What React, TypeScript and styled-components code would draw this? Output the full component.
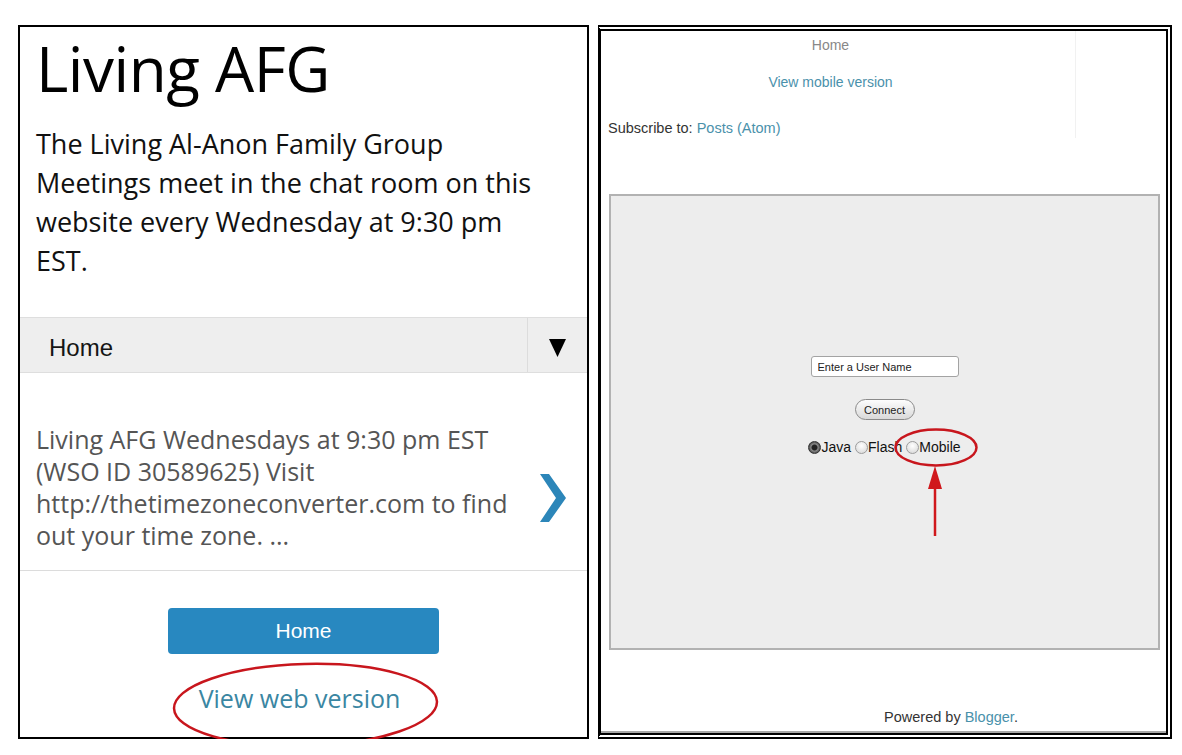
import React from "react";
import styled, { createGlobalStyle } from "styled-components";

const GlobalStyle = createGlobalStyle`
  html, body { margin: 0; padding: 0; background: #ffffff; }
  body { font-family: "Liberation Sans", Arial, sans-serif; }
  * { box-sizing: border-box; }
`;

const Page = styled.div`
  display: flex;
  gap: 9px;
  padding: 25px 0 0 18px;
`;

/* ---------- Left: mobile view ---------- */

const MobilePanel = styled.section`
  position: relative;
  width: 571px;
  height: 714px;
  border: 2px solid #000;
  display: flex;
  flex-direction: column;
  font-family: "Open Sans", "DejaVu Sans", sans-serif;
  background: #fff;
`;

const Header = styled.header`
  padding: 10px 16px 37px;
`;

const Title = styled.h1`
  margin: 0;
  font-weight: 400;
  font-size: 62px;
  line-height: 62px;
  letter-spacing: -0.5px;
  color: #000;
`;

const Description = styled.p`
  margin: 25px 0 0;
  font-size: 27px;
  line-height: 39px;
  color: #111;
  white-space: nowrap;
`;

const MenuBar = styled.nav`
  display: flex;
  height: 56px;
  background: #eeeeee;
  border-top: 1px solid #dedede;
  border-bottom: 1px solid #dedede;
`;

const MenuLabel = styled.div`
  flex: 1;
  display: flex;
  align-items: center;
  padding-left: 29px;
  padding-top: 5px;
  font-family: "Liberation Sans", Arial, sans-serif;
  font-size: 24px;
  color: #151515;
`;

const MenuToggle = styled.div`
  width: 60px;
  display: flex;
  align-items: center;
  justify-content: center;
  padding-top: 5px;
  border-left: 1px solid #dcdcdc;
`;

const PostItem = styled.article`
  display: flex;
  padding: 50px 21px 19px 16px;
  border-bottom: 1px solid #dcdcdc;
`;

const Snippet = styled.p`
  flex: 1;
  margin: 0;
  font-size: 25px;
  line-height: 32px;
  color: #555;
  white-space: nowrap;
`;

const Chevron = styled.div`
  align-self: center;
  margin-top: 22px;
  width: 26px;
  height: 48px;
`;

const Footer = styled.footer`
  display: flex;
  flex-direction: column;
  align-items: center;
  padding-top: 37px;
`;

const HomeButton = styled.button`
  width: 271px;
  height: 46px;
  border: none;
  border-radius: 4px;
  background: #2888c0;
  color: #fff;
  font-family: "Liberation Sans", Arial, sans-serif;
  font-size: 21px;
  padding: 0;
`;

const WebLink = styled.a`
  margin-top: 26px;
  margin-right: 8px;
  font-size: 25px;
  line-height: 36px;
  color: #3a86a2;
  text-decoration: none;
`;

const Annotation = styled.svg<{ $left: number; $top: number }>`
  position: absolute;
  left: ${(p) => p.$left}px;
  top: ${(p) => p.$top}px;
  overflow: visible;
  pointer-events: none;
`;

/* ---------- Right: web view ---------- */

const WebPanel = styled.section`
  position: relative;
  width: 574px;
  height: 714px;
  border: 6px double #000;
  border-left: 3px solid #000;
  display: flex;
  flex-direction: column;
  font-family: "Liberation Sans", Arial, sans-serif;
  background: #fff;
`;

const TopRow = styled.div`
  display: flex;
  height: 107px;
`;

const MainCol = styled.div`
  flex: 1;
  display: flex;
  flex-direction: column;
  padding: 6px 22px 0 7px;
`;

const Sidebar = styled.aside`
  width: 91px;
  border-left: 1px solid #f1f1f1;
`;

const CenterLine = styled.div<{ $gap: number; $color: string }>`
  margin-top: ${(p) => p.$gap}px;
  text-align: center;
  font-size: 14px;
  line-height: 16px;
  color: ${(p) => p.$color};
`;

const Subscribe = styled.div`
  margin-top: 30px;
  font-size: 14.5px;
  line-height: 17px;
  color: #333;
`;

const TealLink = styled.a`
  color: #4a91ab;
  text-decoration: none;
`;

const ChatBox = styled.div`
  position: relative;
  height: 456px;
  margin: 56px 6px 0 8px;
  border: 2px solid #b2b2b2;
  background: #ededed;
  display: flex;
  flex-direction: column;
  align-items: center;
  padding-top: 160px;
`;

const NameInput = styled.input`
  width: 148px;
  height: 21px;
  border: 1px solid #a3a3a3;
  border-radius: 3px;
  background: #fff;
  padding: 0 6px;
  font-family: "Liberation Sans", Arial, sans-serif;
  font-size: 11px;
  color: #222;
  outline: none;
`;

const ConnectButton = styled.button`
  margin-top: 22px;
  width: 60px;
  height: 21px;
  padding: 0;
  border: 1px solid #8a8a8a;
  border-radius: 11px;
  background: linear-gradient(#fdfdfd, #d9d9d9);
  font-family: "Liberation Sans", Arial, sans-serif;
  font-size: 11px;
  color: #222;
`;

const OptionRow = styled.div`
  margin-top: 19px;
  display: flex;
  gap: 4px;
  font-size: 14px;
  line-height: 16px;
  color: #111;
`;

const Option = styled.label`
  display: flex;
  align-items: center;
`;

const Radio = styled.span<{ $checked?: boolean }>`
  display: inline-block;
  width: 13px;
  height: 13px;
  border-radius: 50%;
  border: 1px solid ${(p) => (p.$checked ? "#333" : "#9c9c9c")};
  background: ${(p) =>
    p.$checked
      ? "radial-gradient(circle, #222 0 2.5px, #8a8a8a 3.5px, #444 6px)"
      : "radial-gradient(circle at 50% 35%, #ffffff, #d4d4d4)"};
`;

const PoweredBy = styled.div`
  height: 83px;
  padding: 59px 0 0 135px;
  text-align: center;
  font-size: 14.5px;
  line-height: 17px;
  color: #333;
  border-bottom: 2px solid #a6a6a6;
`;

const RED = "#c8161d";

export default function App() {
  return (
    <>
      <GlobalStyle />
      <Page>
        <MobilePanel>
          <Header>
            <Title>Living AFG</Title>
            <Description>
              The Living Al-Anon Family Group
              <br />
              Meetings meet in the chat room on this
              <br />
              website every Wednesday at 9:30 pm
              <br />
              EST.
            </Description>
          </Header>
          <MenuBar>
            <MenuLabel>Home</MenuLabel>
            <MenuToggle>
              <svg width="17" height="18" viewBox="0 0 17 18">
                <polygon points="0,0 17,0 8.5,18" fill="#000" />
              </svg>
            </MenuToggle>
          </MenuBar>
          <PostItem>
            <Snippet>
              Living AFG Wednesdays at 9:30 pm EST
              <br />
              (WSO ID 30589625) Visit
              <br />
              http://thetimezoneconverter.com to find
              <br />
              out your time zone. ...
            </Snippet>
            <Chevron>
              <svg width="26" height="48" viewBox="0 0 26 48">
                <polygon points="0,0 9,0 26,24 9,48 0,48 16,24" fill="#2c86b9" />
              </svg>
            </Chevron>
          </PostItem>
          <Footer>
            <HomeButton>Home</HomeButton>
            <WebLink>View web version</WebLink>
          </Footer>
          <Annotation $left={152} $top={635} width="267" height="86" viewBox="0 0 267 86">
            <ellipse cx="133.5" cy="43" rx="131.5" ry="41" fill="none" stroke={RED} strokeWidth="2.5" transform="rotate(-1.5 133.5 43)" />
          </Annotation>
        </MobilePanel>

        <WebPanel>
          <TopRow>
            <MainCol>
              <CenterLine $gap={0} $color="#888">Home</CenterLine>
              <CenterLine $gap={21} $color="#4a91ab">View mobile version</CenterLine>
              <Subscribe>
                Subscribe to: <TealLink>Posts (Atom)</TealLink>
              </Subscribe>
            </MainCol>
            <Sidebar />
          </TopRow>
          <ChatBox>
            <NameInput defaultValue="Enter a User Name" />
            <ConnectButton>Connect</ConnectButton>
            <OptionRow>
              <Option>
                <Radio $checked />
                Java
              </Option>
              <Option>
                <Radio />
                Flash
              </Option>
              <Option>
                <Radio />
                Mobile
              </Option>
            </OptionRow>
          </ChatBox>
          <PoweredBy>
            Powered by <TealLink>Blogger</TealLink>.
          </PoweredBy>
          <Annotation $left={293} $top={397} width="84" height="39" viewBox="0 0 84 39">
            <ellipse cx="42" cy="19.5" rx="40.5" ry="18" fill="none" stroke={RED} strokeWidth="2.5" />
          </Annotation>
          <Annotation $left={326} $top={435} width="16" height="70" viewBox="0 0 16 70">
            <polygon points="8,0 1,23 15,23" fill="#d0181c" />
            <line x1="8" y1="20" x2="8" y2="70" stroke="#d0181c" strokeWidth="2.5" />
          </Annotation>
        </WebPanel>
      </Page>
    </>
  );
}
